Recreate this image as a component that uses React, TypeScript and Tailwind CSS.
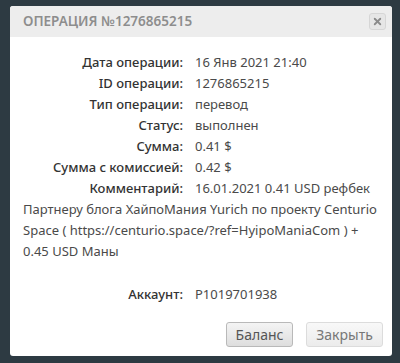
import { X } from "lucide-react"

const rows: [string, string][] = [
  ["Дата операции:", "16 Янв 2021 21:40"],
  ["ID операции:", "1276865215"],
  ["Тип операции:", "перевод"],
  ["Статус:", "выполнен"],
  ["Сумма:", "0.41 $"],
  ["Сумма с комиссией:", "0.42 $"],
  ["Комментарий:", "16.01.2021 0.41 USD рефбек"],
]

const App = () => {
  return (
    <div className="w-[400px] h-[363px] bg-[#2d3a42] pt-[6px] pl-[10px] font-['Noto_Sans',sans-serif]">
      <div className="w-[382px] h-[350px] bg-white rounded-[3px] overflow-hidden flex flex-col">
        {/* HEADER */}
        <div className="h-[31px] bg-[#ededed] flex items-center justify-between pl-[13px] pr-[6px]">
          <span className="text-[13.5px] font-semibold text-[#8d8d8d] uppercase">Операция №1276865215</span>
          <button className="size-[17px] rounded-[3px] border border-[#d6d6d6] bg-[#e6e6e6] flex items-center justify-center">
            <X className="size-[11px] text-[#8a8a8a]" strokeWidth={4} />
          </button>
        </div>

        {/* BODY */}
        <div className="flex-1 pl-[13px] pr-[10px] pt-[15px] text-[13px] leading-[21px] text-[#3a3a3a]">
          {rows.map(([label, value]) => (
            <div key={label} className="flex">
              <span className="w-[160px] text-right font-medium text-[#333]">{label}</span>
              <span className="ml-3 text-[#4a4a4a]">{value}</span>
            </div>
          ))}
          <p className="text-[#4a4a4a]">
            Партнеру блога ХайпоМания Yurich по проекту Centurio Space ( https://centurio.space/?ref=HyipoManiaCom ) + 0.45 USD Маны
          </p>
          <div className="flex mt-[22px]">
            <span className="w-[160px] text-right font-medium text-[#333]">Аккаунт:</span>
            <span className="ml-3 text-[#4a4a4a]">P1019701938</span>
          </div>
        </div>

        {/* FOOTER */}
        <div className="flex justify-end gap-[13px] pr-[9px] pb-[9px]">
          <button className="w-[67px] h-[25px] rounded-[3px] border border-[#b9b9b9] bg-gradient-to-b from-[#f4f4f4] to-[#dedede] text-[14px] text-[#555]">Баланс</button>
          <button className="w-[77px] h-[25px] rounded-[3px] border border-[#dcdcdc] bg-gradient-to-b from-[#f8f8f8] to-[#ececec] text-[14px] text-[#777]">Закрыть</button>
        </div>
      </div>
    </div>
  )
}

export default App
